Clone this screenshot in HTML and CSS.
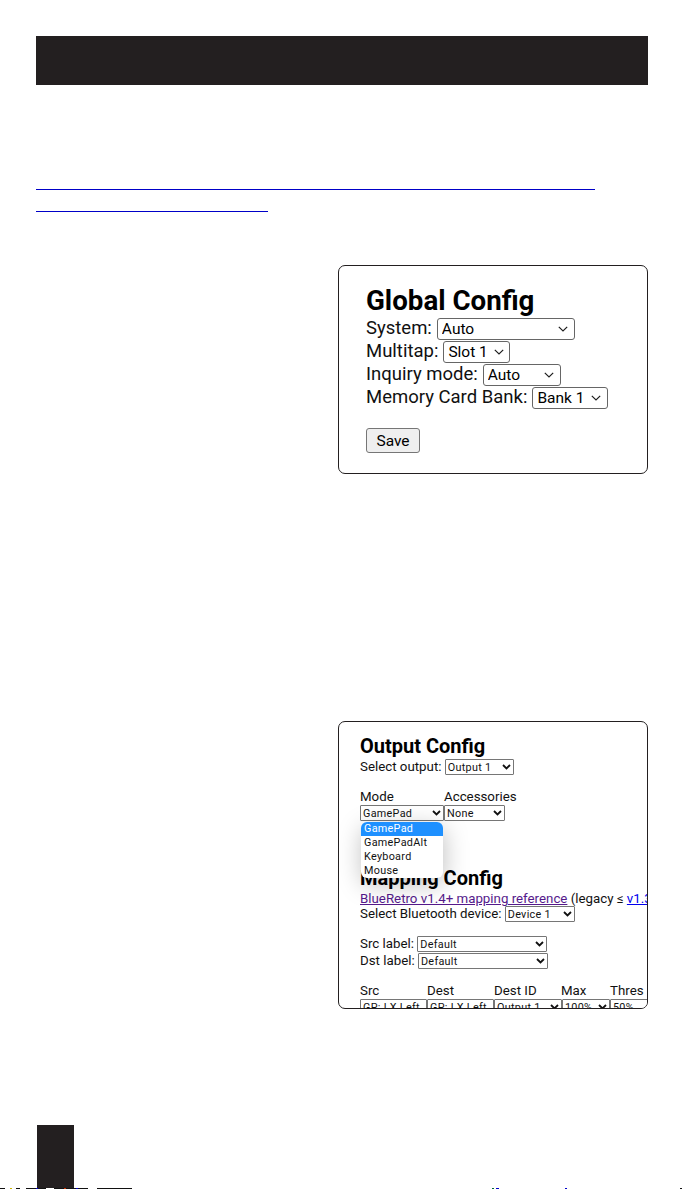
FILE: index.html
```html
<!DOCTYPE html>
<html lang="en">
<head>
<meta charset="utf-8">
<title>BlueRetro configuration</title>
<link rel="stylesheet" href="styles.css">
</head>
<body>
<div class="page">
  <header class="banner"></header>
  <div class="rule rule-long"></div>
  <div class="rule rule-short"></div>

  <section class="card card-global">
    <h2 class="global-title">Global Config</h2>
    <div class="row"><label>System:</label><select class="sel sel-system"><option>Auto</option></select></div>
    <div class="row"><label>Multitap:</label><select class="sel sel-slot"><option>Slot 1</option></select></div>
    <div class="row"><label>Inquiry mode:</label><select class="sel sel-inquiry"><option>Auto</option></select></div>
    <div class="row"><label>Memory Card Bank:</label><select class="sel sel-bank"><option>Bank 1</option></select></div>
    <button class="save">Save</button>
  </section>

  <section class="card card-output">
    <div class="shot">
      <h2 class="out-title">Output Config</h2>
      <div class="line">Select output: <select class="mini sel-output"><option>Output 1</option></select></div>
      <div class="mode-head"><span class="col-mode">Mode</span><span>Accessories</span></div>
      <div class="mode-row"><select class="mini sel-mode"><option>GamePad</option></select><select class="mini sel-acc"><option>None</option></select></div>
      <h2 class="out-title map-title">Mapping Config</h2>
      <div class="line link-line"><a class="visited" href="#a">BlueRetro v1.4+ mapping reference</a> (legacy ≤ <a class="fresh" href="#b">v1.3</a>)</div>
      <div class="line">Select Bluetooth device: <select class="mini sel-bt"><option>Device 1</option></select></div>
      <div class="line labels">Src label: <select class="mini sel-label"><option>Default</option></select></div>
      <div class="line labels-next">Dst label: <select class="mini sel-label"><option>Default</option></select></div>
      <div class="table-head"><span class="th-src">Src</span><span class="th-dest">Dest</span><span class="th-id">Dest ID</span><span class="th-max">Max</span><span>Thres</span></div>
      <div class="table-row"><select class="mini cell-a"><option>GP: LX Left</option></select><select class="mini cell-a"><option>GP: LX Left</option></select><select class="mini cell-id"><option>Output 1</option></select><select class="mini cell-max"><option>100%</option></select><select class="mini cell-thres"><option>50%</option></select></div>
      <ul class="dropdown">
        <li class="picked">GamePad</li>
        <li>GamePadAlt</li>
        <li>Keyboard</li>
        <li>Mouse</li>
      </ul>
    </div>
  </section>

  <div class="tab"></div>
</div>
<div class="edge-strip"></div>
</body>
</html>
```
FILE: styles.css
```css
html, body { margin: 0; padding: 0; background: #fff; }
body { width: 685px; height: 1189px; overflow: hidden; font-family: Roboto, "Liberation Sans", sans-serif; color: #111; }
.page { height: 1188px; padding: 36px 37px 0 36px; box-sizing: border-box; display: flex; flex-direction: column; }
.banner { height: 49px; background: #231f20; flex: none; }
.rule { height: 0; border-top: 1px solid #0000c8; flex: none; }
.rule-long { width: 559px; margin-top: 104px; }
.rule-short { width: 232px; margin-top: 21px; }
.card { align-self: flex-end; width: 310px; box-sizing: border-box; border: 1px solid #231f20; border-radius: 7px; background: #fff; flex: none; }

.card-global { height: 209px; margin-top: 53px; padding: 19px 27px 0; font-size: 18.5px; line-height: 23px; }
.global-title { margin: 0; font-size: 27.7px; line-height: 32px; font-weight: 700; color: #000; }
.row { height: 23px; display: flex; align-items: center; gap: 5px; white-space: nowrap; }
.sel {
  appearance: none;
  font: 15.5px Roboto, sans-serif;
  height: 22px;
  border: 1px solid #666;
  border-radius: 3px;
  color: #000;
  padding: 0 0 0 4px;
  background: #fff url("data:image/svg+xml,%3Csvg xmlns='http://www.w3.org/2000/svg' width='10' height='6'%3E%3Cpath d='M.8.8 5 5 9.2.8' fill='none' stroke='%23222' stroke-width='1.2'/%3E%3C/svg%3E") no-repeat right 6px center;
}
.sel-system { width: 138px; }
.sel-slot { width: 67px; background-position: right 5px center; }
.sel-inquiry { width: 78px; }
.sel-bank { width: 76px; }
.save { display: block; margin-top: 19px; width: 54px; height: 25px; padding: 0; font: 15.5px Roboto, sans-serif; color: #000; background: #efefef; border: 1px solid #767676; border-radius: 3px; }

.card-output { height: 288px; margin-top: 247px; overflow: hidden; }
.shot { position: relative; padding: 12px 0 0 21px; height: 100%; box-sizing: border-box; font-size: 13.3px; line-height: 15px; }
.out-title { margin: 0; font-size: 20px; line-height: 25px; font-weight: 700; color: #000; }
.line { min-height: 15px; white-space: pre; }
.mini {
  appearance: none;
  flex: none;
  font: 10.8px Roboto, sans-serif;
  letter-spacing: .3px;
  height: 16px;
  padding: 0 0 0 2px;
  border: 1px solid #767676;
  border-radius: 1px;
  color: #111;
  vertical-align: top;
  background: #fff url("data:image/svg+xml,%3Csvg xmlns='http://www.w3.org/2000/svg' width='9' height='6'%3E%3Cpath d='M1 1 4.5 4.5 8 1' fill='none' stroke='%23111' stroke-width='1.8'/%3E%3C/svg%3E") no-repeat right 2px center;
}
.sel-output { width: 69px; }
.mode-head { display: flex; margin-top: 14px; height: 16px; align-items: flex-start; }
.col-mode { width: 84px; }
.mode-row { display: flex; height: 16px; }
.sel-mode { width: 84px; }
.sel-acc { width: 61px; }
.map-title { margin-top: 45px; }
.visited { color: #551a8b; }
.fresh { color: #0000ee; }
.sel-bt { width: 70px; }
.labels { margin-top: 14px; }
.labels-next { margin-top: 1px; }
.sel-label { width: 130px; }
.table-head { display: flex; margin-top: 14px; height: 15px; align-items: center; }
.table-head span { flex: none; }
.th-src, .th-dest, .th-id { width: 67px; }
.th-max { width: 49px; }
.table-row { display: flex; margin-top: 1px; }
.cell-a { width: 67px; background-image: none; }
.cell-id { width: 68px; }
.cell-max { width: 48px; }
.cell-thres { width: 60px; background-image: none; }
.dropdown { position: absolute; left: 22px; top: 100px; width: 82px; margin: 0; padding: 0; list-style: none; background: #fff; border-radius: 6px; box-shadow: 1px 6px 24px rgba(0,0,0,.25); font-size: 10.8px; letter-spacing: .3px; line-height: 14px; overflow: hidden; }
.dropdown li { height: 14px; padding-left: 3px; }
.dropdown .picked { background: #1e90ff; color: #fff; }

.tab { width: 37px; height: 63px; background: #231f20; margin-top: 116px; margin-left: 1px; flex: none; }
.edge-strip {
  height: 1px;
  background-repeat: no-repeat;
  background-image:
    linear-gradient(90deg, #111 0 5px, transparent 5px 10px, #c8b400 10px 12px, transparent 12px 16px, #111 16px 20px, transparent 20px 26px, #111 26px 36px, #0000c8 36px 38px, #111 38px 46px, transparent 46px 54px, #111 54px 64px, #c83200 64px 66px, #111 66px 76px, #0000c8 76px 78px, #111 78px 88px, transparent 88px 97px, #111 97px 132px),
    linear-gradient(90deg, #063 0 2px, transparent 2px 4px, #00c 4px 7px, transparent 7px 73px, #00c 73px 75px, transparent 75px 188px, #111 188px 190px);
  background-size: 132px 1px, 190px 1px;
  background-position: 0 0, 492px 0;
}
```
